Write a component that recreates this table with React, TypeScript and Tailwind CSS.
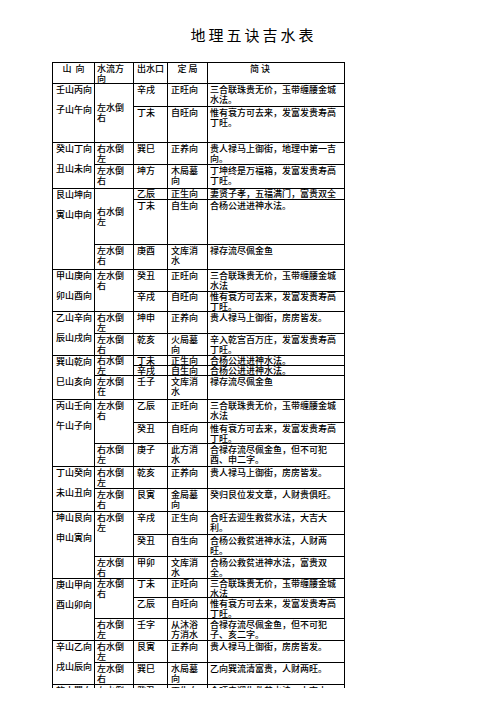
type Row = { kou: string; ju: string; jue: string; tight?: boolean };
type Flow = { text: string; span: number; middle?: boolean };
type Group = { shan: [string, string]; flows: Flow[]; rows: Row[] };

const groups: Group[] = [
  {
    shan: ["壬山丙向", "子山午向"],
    flows: [{ text: "左水倒右", span: 2, middle: true }],
    rows: [
      { kou: "辛戌", ju: "正旺向", jue: "三合联珠贵无价，玉带缠腰金城水法。" },
      { kou: "丁未", ju: "自旺向", jue: "惟有衰方可去来，发富发贵寿高丁旺。" },
    ],
  },
  {
    shan: ["癸山丁向", "丑山未向"],
    flows: [
      { text: "右水倒左", span: 1 },
      { text: "左水倒右", span: 1 },
    ],
    rows: [
      { kou: "巽巳", ju: "正养向", jue: "贵人禄马上御街，地理中第一吉向。" },
      { kou: "坤方", ju: "木局墓向", jue: "丁坤终是万福箱，发富发贵寿高丁旺。" },
    ],
  },
  {
    shan: ["艮山坤向", "寅山申向"],
    flows: [
      { text: "右水倒左", span: 2, middle: true },
      { text: "左水倒右", span: 1 },
    ],
    rows: [
      { kou: "乙辰", ju: "正生向", jue: "妻贤子孝，五福满门，富贵双全", tight: true },
      { kou: "丁未", ju: "自生向", jue: "合杨公进进神水法。" },
      { kou: "庚酉", ju: "文库消水", jue: "禄存流尽佩金鱼" },
    ],
  },
  {
    shan: ["甲山庚向", "卯山酉向"],
    flows: [{ text: "左水倒右", span: 2 }],
    rows: [
      { kou: "癸丑", ju: "正旺向", jue: "三合联珠贵无价，玉带缠腰金城水法" },
      { kou: "辛戌", ju: "自旺向", jue: "惟有衰方可去来，发富发贵寿高丁旺。", tight: true },
    ],
  },
  {
    shan: ["乙山辛向", "辰山戌向"],
    flows: [
      { text: "右水倒左", span: 1 },
      { text: "左水倒右", span: 1 },
    ],
    rows: [
      { kou: "坤申", ju: "正养向", jue: "贵人禄马上御街，房房皆发。" },
      { kou: "乾亥", ju: "火局墓向", jue: "辛入乾宫百万庄，发富发贵寿高丁旺。" },
    ],
  },
  {
    shan: ["巽山乾向", "巳山亥向"],
    flows: [
      { text: "右水倒左", span: 2 },
      { text: "左水倒在", span: 1 },
    ],
    rows: [
      { kou: "丁未", ju: "正生向", jue: "合杨公进进神水法。", tight: true },
      { kou: "辛戌", ju: "自生向", jue: "合杨公进进神水法。", tight: true },
      { kou: "壬子", ju: "文库消水", jue: "禄存流尽佩金鱼" },
    ],
  },
  {
    shan: ["丙山壬向", "午山子向"],
    flows: [
      { text: "左水倒右", span: 2 },
      { text: "右水倒左", span: 1 },
    ],
    rows: [
      { kou: "乙辰", ju: "正旺向", jue: "三合联珠贵无价，玉带缠腰金城水法" },
      { kou: "癸丑", ju: "自旺向", jue: "惟有衰方可去来，发富发贵寿高丁旺。" },
      { kou: "庚子", ju: "此方消水", jue: "合禄存流尽佩金鱼，但不可犯酉、申二字。" },
    ],
  },
  {
    shan: ["丁山癸向", "未山丑向"],
    flows: [
      { text: "右水倒左", span: 1 },
      { text: "左水倒右", span: 1 },
    ],
    rows: [
      { kou: "乾亥", ju: "正养向", jue: "贵人禄马上御街，房房皆发。" },
      { kou: "艮寅", ju: "金局墓向", jue: "癸归艮位发文章，人财贵俱旺。" },
    ],
  },
  {
    shan: ["坤山艮向", "申山寅向"],
    flows: [
      { text: "右水倒左", span: 2 },
      { text: "左水倒右", span: 1 },
    ],
    rows: [
      { kou: "辛戌", ju: "正生向", jue: "合旺去迎生救贫水法，大吉大利。" },
      { kou: "癸丑", ju: "自生向", jue: "合杨公救贫进神水法，人财两旺。" },
      { kou: "甲卯", ju: "文库消水", jue: "合杨公救贫进神水法，富贵双全。" },
    ],
  },
  {
    shan: ["庚山甲向", "酉山卯向"],
    flows: [
      { text: "左水倒右", span: 2 },
      { text: "右水倒左", span: 1 },
    ],
    rows: [
      { kou: "丁未", ju: "正旺向", jue: "三合联珠贵无价，玉带缠腰金城水法", tight: true },
      { kou: "乙辰", ju: "自旺向", jue: "惟有衰方可去来，发富发贵寿高丁旺。" },
      { kou: "壬字", ju: "从沐浴方消水", jue: "合禄存流尽佩金鱼，但不可犯子、亥二字。" },
    ],
  },
  {
    shan: ["辛山乙向", "戌山辰向"],
    flows: [
      { text: "右水倒左", span: 1 },
      { text: "左水倒右", span: 1 },
    ],
    rows: [
      { kou: "艮寅", ju: "正养向", jue: "贵人禄马上御街，房房皆发。" },
      { kou: "巽巳", ju: "水局墓向", jue: "乙向巽流清富贵，人财两旺。" },
    ],
  },
  {
    shan: ["乾山巽向", "亥山巳向"],
    flows: [{ text: "右水倒左", span: 2 }],
    rows: [
      { kou: "癸丑", ju: "正生向", jue: "合旺去迎生救贫水法，大吉大利。" },
      { kou: "乙辰", ju: "自生向", jue: "合杨公救贫进神水法，人财两旺。" },
    ],
  },
];

const spans: Record<number, string> = {
  1: "row-span-1",
  2: "row-span-2",
  3: "row-span-3",
};

const cell = "border-r border-b border-black";

function GroupCells({ g }: { g: Group }) {
  const out: React.ReactNode[] = [];
  let fi = 0;
  let next = 0;

  g.rows.forEach((r, i) => {
    // rows only one line high in the document get no top padding and a tighter line
    const pad = r.tight ? "pt-0 leading-[9.5px]" : "pt-[1px]";
    if (i === 0) {
      out.push(
        <div key="shan" className={`${cell} ${spans[g.rows.length]} col-start-1 pl-[3px] pt-[1px] flex flex-col gap-[10px]`}>
          <div>{g.shan[0]}</div>
          <div>{g.shan[1]}</div>
        </div>
      );
    }
    if (i === next) {
      const f = g.flows[fi++];
      next += f.span;
      out.push(
        <div
          key={`flow${i}`}
          className={`${cell} ${spans[f.span]} col-start-2 pl-[2px] pr-[1px] ${f.middle ? "flex items-center" : pad}`}
        >
          <div>{f.text}</div>
        </div>
      );
    }
    out.push(
      <div key={`k${i}`} className={`${cell} ${pad} col-start-3 pl-[3px]`}>
        {r.kou}
      </div>,
      <div key={`j${i}`} className={`${cell} ${pad} col-start-4 pl-[3px] pr-[1px]`}>
        {r.ju}
      </div>,
      <div key={`d${i}`} className={`${cell} ${pad} col-start-5 pl-[2px]`}>
        {r.jue}
      </div>
    );
  });

  return <>{out}</>;
}

export default function App() {
  return (
    <div className="h-[713px] bg-white overflow-hidden text-black font-['Noto_Sans_CJK_SC',sans-serif]">
      <div className="h-[688px] overflow-hidden pt-[27px]">
        <h1 className="text-[15px] leading-[15px] tracking-[3px] text-center pl-[3px] font-normal">
          地理五诀吉水表
        </h1>

        <div className="mt-[20px] ml-[52px] w-[293px] border-t border-l border-black grid grid-cols-[42px_39px_34px_40px_137px] grid-rows-[21px_23px_36px_22px_24px_11px_45px_25px_22px_20px_22px_22px_10px_10px_24px_23px_21px_23px_22px_23px_23px_22px_22px_19px_21px_22px_22px_22px_22px_22px] text-[9px] leading-[10px] font-medium">
          <div className={`${cell} pt-[1px] text-center whitespace-pre`}>山  向</div>
          <div className={`${cell} pt-[1px] pl-[2px] pr-[1px]`}>水流方向</div>
          <div className={`${cell} pt-[1px] pl-[3px]`}>出水口</div>
          <div className={`${cell} pt-[1px] text-center`}>定 局</div>
          <div className={`${cell} pt-[1px] pl-[42px] whitespace-pre`}>简 诀</div>

          {groups.map((g) => (
            <GroupCells key={g.shan[0]} g={g} />
          ))}
        </div>
      </div>
    </div>
  );
}
